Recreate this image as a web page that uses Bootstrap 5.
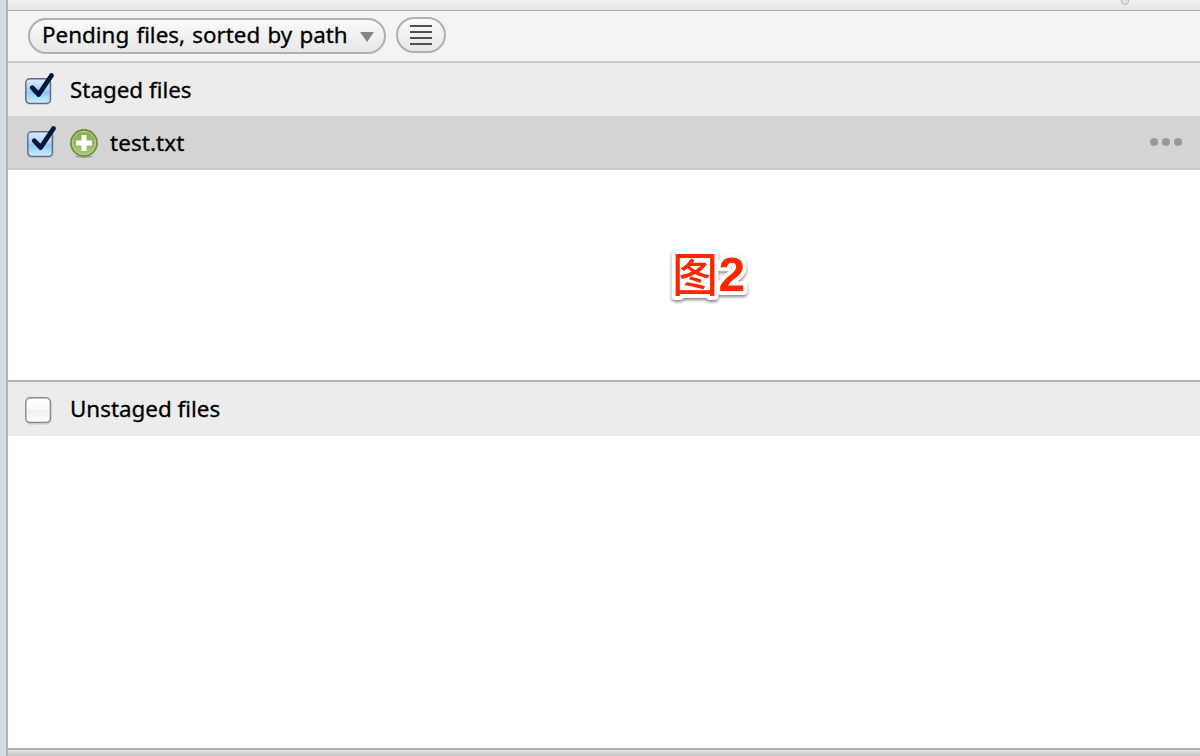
<!DOCTYPE html>
<html lang="en">
<head>
<meta charset="utf-8">
<title>Pending files</title>
<link href="https://cdn.jsdelivr.net/npm/bootstrap@5.3.0/dist/css/bootstrap.min.css" rel="stylesheet">
<style>
body{font:22.4px/30px "Noto Sans","Open Sans",sans-serif;color:#000;background:#fff}
.gutter{width:8px;background:linear-gradient(90deg,#d3dae5 0 4px,#d7dce5 4px 6px,#b3b3b3 6px)}
.strip{height:11px;background:linear-gradient(#f1f1f1,#e5e5e5);border-bottom:1px solid #acacac}
.grip{left:1113px;top:-3px;width:8px;height:8px;border:1px solid #b4b4b4;background:#e4e4e4}
.tools{height:52px;background:#f4f4f4;border-bottom:2px solid #c9c9c9;padding:6px 0 0 20px;gap:10px}
.pill{height:36px;border:2px solid #b0b0b0;border-radius:18px;background:linear-gradient(#fafafa,#e7e7e7);color:#000}
.sorter{width:358px;margin-top:1px;padding:0 10px 2px 12px}
.sorter .label-text{word-spacing:1.4px}
.lines{width:50px}
.bar{height:53px;background:#ececec;padding-left:16px}
.file{height:54px;background:#d4d4d4;border-bottom:2px solid #cacaca;padding:0 18px}
.file .label-text{padding-top:1px;letter-spacing:.1px}
.bar2{height:56px;border-top:2px solid #b3b3b3}
.staged{height:210px}
.foot{height:8px;border-top:2px solid #b0b0b0;background:linear-gradient(#e2e2e2 0 2px,#d2d2d2 3px,#cacaca)}
.label-text{white-space:nowrap;-webkit-text-stroke:.3px #000}
.caption-art{margin-top:9px}
svg{display:block;flex:none;overflow:visible}
</style>
</head>
<body class="vh-100 overflow-hidden">
<svg width="0" height="0" class="position-absolute"><defs>
<linearGradient id="blue" x2="0" y2="1"><stop stop-color="#d9ebfb"/><stop offset=".5" stop-color="#a6d1f8"/><stop offset=".52" stop-color="#8cc6f7"/><stop offset="1" stop-color="#c9f0ff"/></linearGradient>
<linearGradient id="blank" x2="0" y2="1"><stop stop-color="#fff"/><stop offset=".5" stop-color="#f9f9f9"/><stop offset=".52" stop-color="#f0f0f0"/><stop offset="1" stop-color="#fff"/></linearGradient>
<linearGradient id="green" x2="0" y2="1"><stop stop-color="#86a850"/><stop offset="1" stop-color="#a9c971"/></linearGradient>
<g id="checked"><rect x="1.5" y="7" width="26" height="26" rx="4.5" fill="#777" opacity=".25"/><rect x="1.8" y="6.8" width="24.6" height="24.6" rx="4" fill="url(#blue)" stroke="#626881" stroke-width="1.4"/><path d="M8.200 15.700 14.700 22.500 27.500 3.500" fill="none" stroke="#04193a" stroke-width="4.8" stroke-linecap="round" stroke-linejoin="round"/></g>
</defs></svg>
<div class="d-flex h-100">
  <div class="gutter flex-shrink-0"></div>
  <main class="d-flex flex-column flex-grow-1">
    <div class="strip position-relative overflow-hidden flex-shrink-0"><span class="grip position-absolute rounded-circle"></span></div>
    <div class="tools d-flex align-items-start flex-shrink-0">
      <button class="pill sorter d-flex align-items-center justify-content-between"><span class="label-text">Pending files, sorted by path</span>
        <svg width="14" height="11"><path d="M0 2h14L7 12z" fill="#858585"/></svg></button>
      <button class="pill lines d-flex align-items-center justify-content-center p-0" aria-label="View">
        <svg width="22" height="20"><path d="M0 1h22M0 7h22M0 13h22M0 19h22" stroke="#505050" stroke-width="2"/></svg></button>
    </div>
    <div class="bar d-flex align-items-center flex-shrink-0">
      <svg width="46" height="34"><use href="#checked" y="-1"/></svg><span class="label-text">Staged files</span></div>
    <div class="file d-flex align-items-center flex-shrink-0">
      <svg width="44" height="34"><use href="#checked"/></svg>
      <svg width="40" height="32"><ellipse cx="14" cy="30.500" rx="9" ry="1.4" fill="#888" opacity=".65"/><circle cx="14" cy="17" r="13" fill="url(#green)" stroke="#6b913c" stroke-width="1.8"/><circle cx="14" cy="17" r="11.6" fill="none" stroke="#bdd59b"/><path d="M14 9v16M6 17h16" stroke="#fff" stroke-width="5"/></svg>
      <span class="label-text">test.txt</span>
      <svg class="ms-auto" width="33" height="8"><g fill="#999"><circle cx="5" cy="4" r="4"/><circle cx="17" cy="4" r="4"/><circle cx="29" cy="4" r="4"/></g></svg>
    </div>
    <div class="staged flex-shrink-0 d-flex align-items-center">
      <svg class="caption-art" width="800" height="80"><g fill="#ff2600" style="filter:drop-shadow(0 2px 1.500px #0007)"><g stroke="#fff" stroke-width="8" stroke-linejoin="round" paint-order="stroke"><text x="664" y="51" font-size="46" font-weight="500" font-family="Noto Sans CJK SC,sans-serif">图</text><text x="710.500" y="51" font-size="48" font-weight="700" font-family="Liberation Sans,sans-serif">2</text></g></g></svg>
    </div>
    <div class="bar bar2 d-flex align-items-center flex-shrink-0">
      <svg width="46" height="34"><rect x="1.500" y="6.500" width="26" height="26" rx="5" fill="#777" opacity=".3"/><rect x="1.800" y="5.800" width="24.600" height="24.600" rx="4.500" fill="url(#blank)" stroke="#898989" stroke-width="1.400"/></svg><span class="label-text">Unstaged files</span></div>
    <div class="flex-grow-1 bg-white"></div>
    <div class="foot flex-shrink-0"></div>
  </main>
</div>
<script src="https://cdn.jsdelivr.net/npm/bootstrap@5.3.0/dist/js/bootstrap.bundle.min.js"></script>
</body>
</html>
